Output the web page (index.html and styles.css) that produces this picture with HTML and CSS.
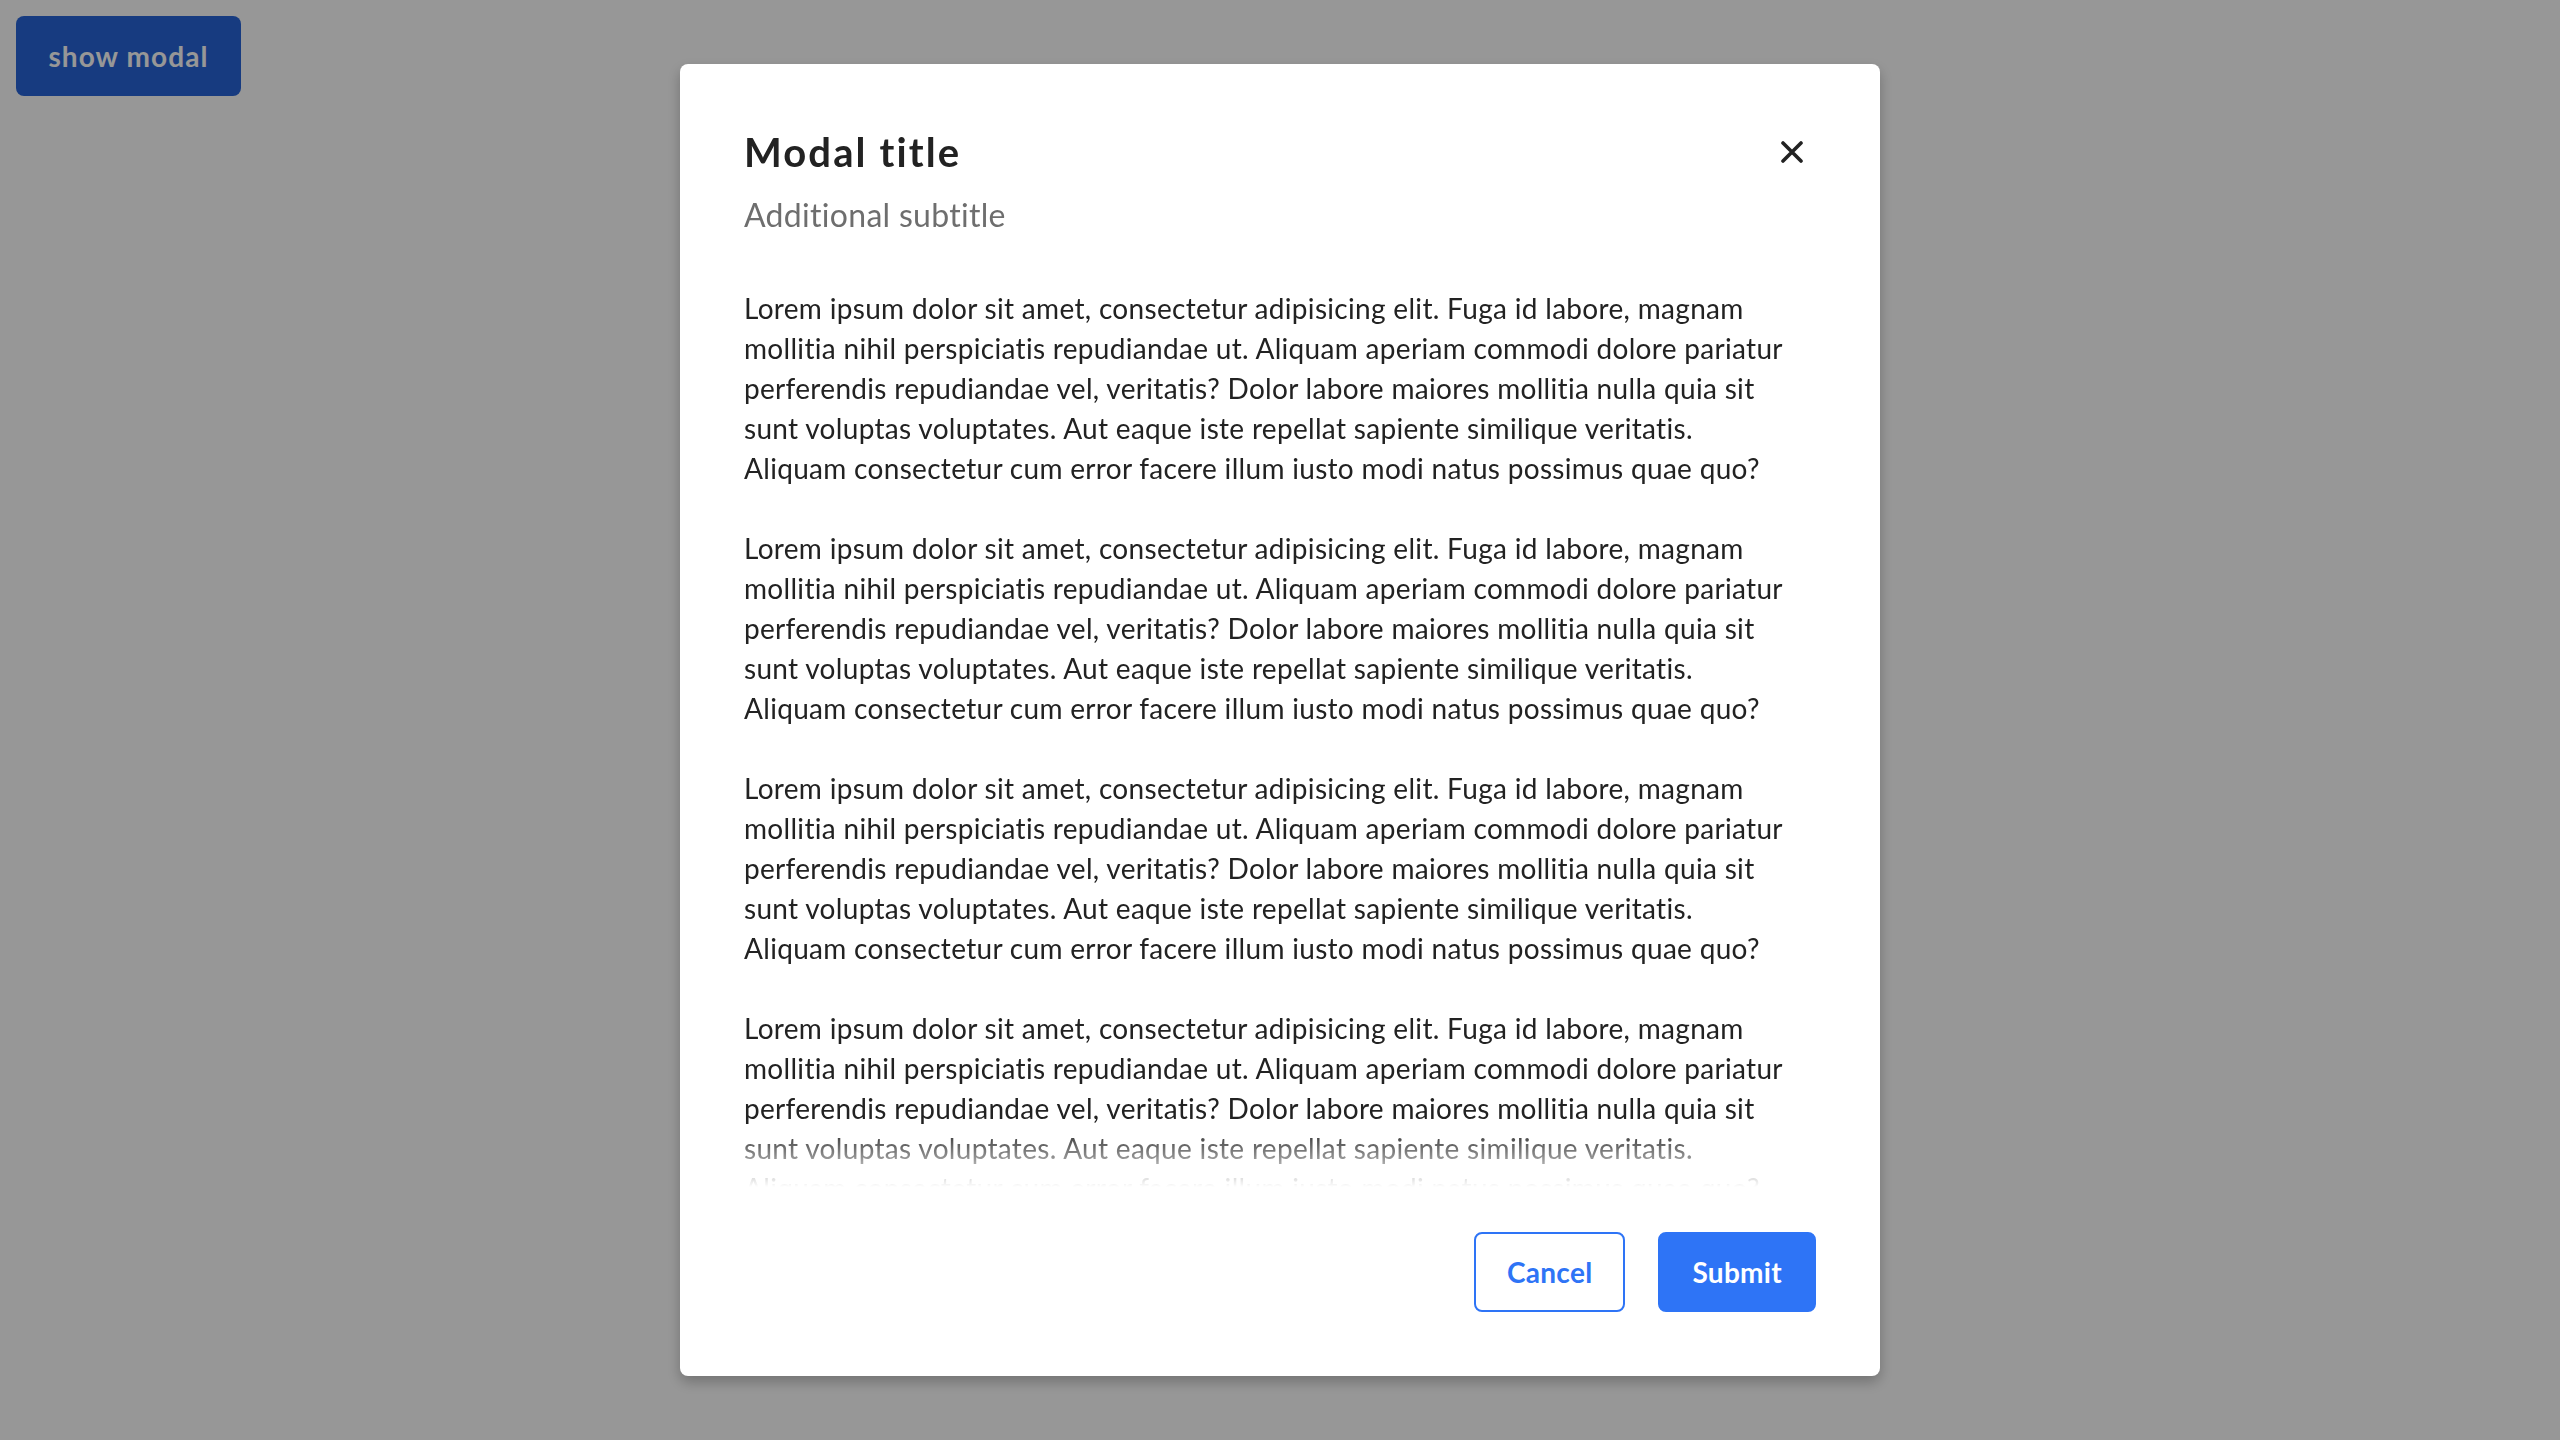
FILE: index.html
```html
<!DOCTYPE html>
<html lang="en">
<head>
<meta charset="utf-8">
<title>Modal</title>
<link rel="stylesheet" href="styles.css">
</head>
<body>
<button class="show-btn" type="button">show modal</button>

<div class="overlay">
  <div class="modal" role="dialog" aria-labelledby="modal-title">
    <header class="modal-header">
      <div class="heading">
        <h2 class="title" id="modal-title">Modal title</h2>
        <p class="subtitle">Additional subtitle</p>
      </div>
      <button class="close" type="button" aria-label="Close">
        <svg width="22" height="22" viewBox="0 0 22 22" aria-hidden="true">
          <path d="M2 2 L20 20 M20 2 L2 20" stroke="#222" stroke-width="3.6" stroke-linecap="round" fill="none"/>
        </svg>
      </button>
    </header>

    <div class="modal-body">
      <p>Lorem ipsum dolor sit amet, consectetur adipisicing elit. Fuga id labore, magnam<br>mollitia nihil perspiciatis repudiandae ut. Aliquam aperiam commodi dolore pariatur<br>perferendis repudiandae vel, veritatis? Dolor labore maiores mollitia nulla quia sit<br>sunt voluptas voluptates. Aut eaque iste repellat sapiente similique veritatis.<br>Aliquam consectetur cum error facere illum iusto modi natus possimus quae quo?</p>
      <p>Lorem ipsum dolor sit amet, consectetur adipisicing elit. Fuga id labore, magnam<br>mollitia nihil perspiciatis repudiandae ut. Aliquam aperiam commodi dolore pariatur<br>perferendis repudiandae vel, veritatis? Dolor labore maiores mollitia nulla quia sit<br>sunt voluptas voluptates. Aut eaque iste repellat sapiente similique veritatis.<br>Aliquam consectetur cum error facere illum iusto modi natus possimus quae quo?</p>
      <p>Lorem ipsum dolor sit amet, consectetur adipisicing elit. Fuga id labore, magnam<br>mollitia nihil perspiciatis repudiandae ut. Aliquam aperiam commodi dolore pariatur<br>perferendis repudiandae vel, veritatis? Dolor labore maiores mollitia nulla quia sit<br>sunt voluptas voluptates. Aut eaque iste repellat sapiente similique veritatis.<br>Aliquam consectetur cum error facere illum iusto modi natus possimus quae quo?</p>
      <p>Lorem ipsum dolor sit amet, consectetur adipisicing elit. Fuga id labore, magnam<br>mollitia nihil perspiciatis repudiandae ut. Aliquam aperiam commodi dolore pariatur<br>perferendis repudiandae vel, veritatis? Dolor labore maiores mollitia nulla quia sit<br>sunt voluptas voluptates. Aut eaque iste repellat sapiente similique veritatis.<br>Aliquam consectetur cum error facere illum iusto modi natus possimus quae quo?</p>
    </div>

    <footer class="modal-footer">
      <button class="btn btn-outline" type="button">Cancel</button>
      <button class="btn btn-primary" type="button">Submit</button>
    </footer>
  </div>
</div>
</body>
</html>
```

FILE: styles.css
```css
* {
  box-sizing: border-box;
}

html, body {
  margin: 0;
  height: 100%;
}

body {
  background: #ffffff;
  font-family: "Lato", "Noto Sans", sans-serif;
  color: #222222;
  padding: 16px;
}

.show-btn {
  display: flex;
  align-items: center;
  justify-content: center;
  width: 225px;
  height: 80px;
  padding: 0;
  border: none;
  border-radius: 8px;
  background: #2765d8;
  color: #ffffff;
  font-family: inherit;
  font-size: 28px;
  font-weight: 700;
  letter-spacing: 1.1px;
}

.overlay {
  position: fixed;
  inset: 0;
  background: rgba(0, 0, 0, 0.408);
  display: flex;
  align-items: center;
  justify-content: center;
}

.modal {
  width: 1200px;
  height: calc(100vh - 128px);
  background: #ffffff;
  border-radius: 8px;
  box-shadow: 0 6px 14px rgba(0, 0, 0, 0.25);
  padding: 64px;
  display: flex;
  flex-direction: column;
}

.modal-header {
  display: flex;
  justify-content: space-between;
  align-items: flex-start;
  margin-bottom: 53px;
}

.title {
  margin: 0;
  font-size: 40px;
  line-height: 48px;
  font-weight: 700;
  letter-spacing: 2.1px;
  color: #222222;
}

.subtitle {
  margin: 19px 0 0;
  font-size: 32px;
  line-height: 40px;
  letter-spacing: 0.3px;
  color: #6e6e6e;
}

.close {
  display: flex;
  align-items: center;
  justify-content: center;
  width: 44px;
  height: 44px;
  margin: 2px 2px 0 0;
  padding: 0;
  border: none;
  background: transparent;
}

.modal-body {
  flex: 1;
  min-height: 0;
  overflow-y: auto;
  scrollbar-width: none;
  font-size: 28px;
  line-height: 40px;
  letter-spacing: 0.31px;
  color: #222222;
  white-space: nowrap;
  -webkit-mask-image: linear-gradient(to bottom, #000 calc(100% - 60px), transparent 100%);
  mask-image: linear-gradient(to bottom, #000 calc(100% - 60px), transparent 100%);
}

.modal-body p {
  margin: 0 0 40px;
}

.modal-footer {
  display: flex;
  justify-content: flex-end;
  gap: 33px;
  margin-top: 45px;
}

.btn {
  height: 80px;
  padding: 0 31px;
  border-radius: 8px;
  font-family: inherit;
  font-size: 28px;
  font-weight: 700;
  letter-spacing: 0.3px;
}

.btn-outline {
  background: #ffffff;
  color: #2e74f6;
  border: 2px solid #2e74f6;
}

.btn-primary {
  background: #2e74f6;
  color: #ffffff;
  border: 2px solid #2e74f6;
  padding: 0 32px;
}
```
